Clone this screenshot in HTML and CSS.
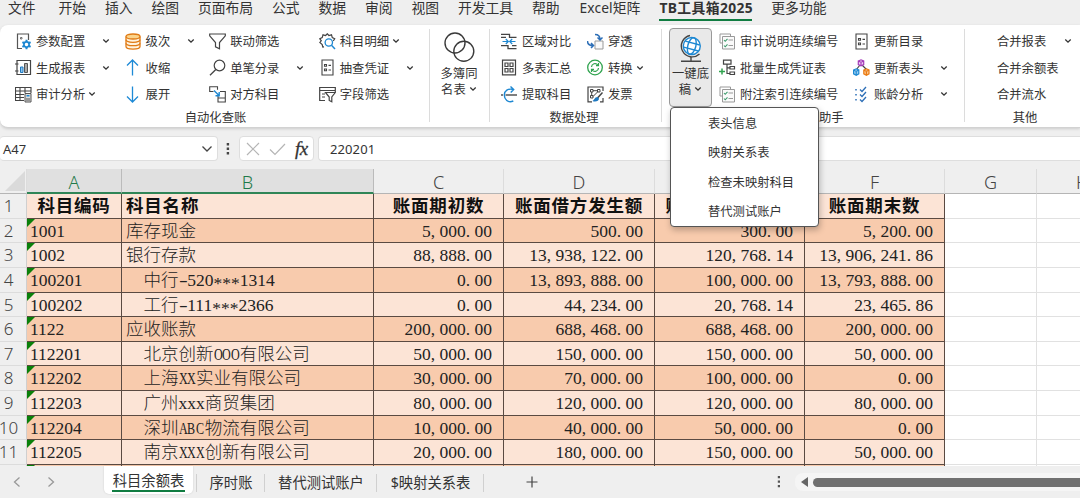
FILE: index.html
```html
<!DOCTYPE html>
<html lang="zh-CN">
<head>
    <meta charset="UTF-8">
    <meta name="viewport" content="width=device-width, initial-scale=1.0">
    <title>科目余额表</title>
    <link rel="stylesheet" href="styles.css">
</head>
<body>

<svg class="defs" width="0" height="0">
    <symbol id="chev" viewBox="0 0 8 6"><path d="M1.3 1.5 4 4.200 6.700 1.500" fill="none" stroke="#333" stroke-width="1.300"/></symbol>
    <symbol id="list" viewBox="0 0 17 17"><path d="M3 1h11v15H3zM5.5 5.500h2v1.800h-2zM5.500 10h2v1.800h-2zM9.500 6.400H12M9.500 11H12" fill="none" stroke="#444" stroke-width="1.100"/></symbol>
    <symbol id="checks" viewBox="0 0 17 17">
        <path d="M3 10H1V1h10.500v2.500" fill="none" stroke="#999"/>
        <path d="M3.500 3.500H15.500V16H3.500z" fill="#fafafa" stroke="#999"/>
        <path d="M9.500 7H14M9.500 12.500H14" stroke="#999"/>
        <path d="M5 7l1.200 1.300L8.500 5.800M5 12.500l1.200 1.300 2.300-2.500" fill="none" stroke="#3d9b6c" stroke-width="1.100"/>
    </symbol>
</svg>

<nav class="tabs">
    <span class="file">文件</span>
    <span>开始</span>
    <span>插入</span>
    <span>绘图</span>
    <span>页面布局</span>
    <span>公式</span>
    <span>数据</span>
    <span>审阅</span>
    <span>视图</span>
    <span>开发工具</span>
    <span>帮助</span>
    <span class="excel">Excel矩阵</span>
    <span class="active">TB工具箱2025</span>
    <span>更多功能</span>
</nav>

<div class="ribbon">
    <section class="group audit">
        <div class="cols">
            <div class="col w95">
                <div class="cmd">
                    <svg class="icon" viewBox="0 0 17 17"><path d="M7 15.500H2.500V1H13.500v6" fill="none" stroke="#555" stroke-width="1.200"/><path d="M5.500 4.500h1.500v1.500H5.500z" fill="none" stroke="#555" stroke-width=".8"/><path d="M11.500 6.800v9.400M7.400 9.100l8.200 4.800M7.400 13.900l8.200-4.800" stroke="#1e88d2" stroke-width="2"/><circle cx="11.500" cy="11.500" r="2.600" fill="#fff" stroke="#1e88d2" stroke-width="1.700"/></svg>
                    <span>参数配置</span><svg class="chev end"><use href="#chev"/></svg>
                </div>
                <div class="cmd">
                    <svg class="icon" viewBox="0 0 17 17"><path d="M2 1.500h13.500v14H2zM0 5h3.500M0 12h3.500" fill="none" stroke="#444" stroke-width="1.200"/><path d="M5.500 8H8v5.500H5.500z" fill="#8ac4ee" stroke="#1e78c0"/><path d="M9.500 4.500h3v9h-3z" fill="#aaa" stroke="#555"/></svg>
                    <span>生成报表</span><svg class="chev end"><use href="#chev"/></svg>
                </div>
                <div class="cmd">
                    <svg class="icon" viewBox="0 0 17 17"><path d="M9 14.500H.5v-13h15.500V7M.5 5H16M.5 8.500H9M.5 11.500H9M5 1.500v13M10 1.500V7" fill="none" stroke="#444" stroke-width="1.100"/><path d="M10 7.500h6v8.500h-6z" fill="#ddd" stroke="#555"/><path d="M11.500 9h3v1.500h-3z" fill="#1e88d2"/><path d="M12 12v3M14 12v3" stroke="#555"/></svg>
                    <span>审计分析</span><svg class="chev"><use href="#chev"/></svg>
                </div>
            </div>
            <div class="col w70">
                <div class="cmd">
                    <svg class="icon" viewBox="0 0 17 17"><path d="M1 3.500v10C1 17 15 17 15 13.500v-10" fill="#fff3df" stroke="#e07b16" stroke-width="1.300"/><ellipse cx="8" cy="3.500" rx="7" ry="2.500" fill="#fbd48b" stroke="#e07b16" stroke-width="1.300"/><path d="M1 6.800c0 3.300 14 3.300 14 0M1 10.200c0 3.300 14 3.300 14 0" fill="none" stroke="#e07b16" stroke-width="1.300"/></svg>
                    <span>级次</span><svg class="chev end"><use href="#chev"/></svg>
                </div>
                <div class="cmd">
                    <svg class="icon" viewBox="0 0 17 17"><path d="M7.500 16.500V1.500M2 6.500l5.500-5.500L13 6.500" fill="none" stroke="#1e8ad6" stroke-width="1.300"/></svg>
                    <span>收缩</span>
                </div>
                <div class="cmd">
                    <svg class="icon" viewBox="0 0 17 17"><path d="M7.500 .5v15M2 10.500l5.500 5.500L13 10.500" fill="none" stroke="#1e8ad6" stroke-width="1.300"/></svg>
                    <span>展开</span>
                </div>
            </div>
            <div class="col w95">
                <div class="cmd">
                    <svg class="icon" viewBox="0 0 17 17"><path d="M.7 1h15.600v1.800L10.500 9.500V15.800L6.500 13.800V9.500L.7 2.800z" fill="none" stroke="#444" stroke-width="1.200"/></svg>
                    <span>联动筛选</span>
                </div>
                <div class="cmd">
                    <svg class="icon" viewBox="0 0 17 17"><circle cx="10.500" cy="6.500" r="5.300" fill="none" stroke="#444" stroke-width="1.200"/><path d="M6.800 10.500 1 16.300" stroke="#444" stroke-width="1.300"/></svg>
                    <span>单笔分录</span><svg class="chev end"><use href="#chev"/></svg>
                </div>
                <div class="cmd">
                    <svg class="icon" viewBox="0 0 17 17"><path d="M4.500 5.500H.7V.8H8.500v3M11 5.500h5.300V9M9 9.500v6.500h7.300v-7M9 12H16.300" fill="none" stroke="#444" stroke-width="1.100"/><path d="M5 4.500l5 5M10.200 6v3.700H6.500" fill="none" stroke="#1e88d2" stroke-width="1.400"/></svg>
                    <span>对方科目</span>
                </div>
            </div>
            <div class="col w95">
                <div class="cmd">
                    <svg class="icon" viewBox="0 0 17 17"><path d="M5 13.800 3.800 14l-.6-2.400L.8 9.400 2.300 7.800.8 5.800l2.400-1.200L4 1.800l2.600.7L8.300 .8l1.600 1.700 2.600-.7.8 2.800 2.400 1.200L14.300 8" fill="none" stroke="#444" stroke-width="1.200"/><circle cx="9.800" cy="9.500" r="3.700" fill="#fff" stroke="#1e88d2" stroke-width="1.300"/><path d="M12.500 12.300 16 16" stroke="#1e88d2" stroke-width="1.500"/></svg>
                    <span>科目明细</span><svg class="chev"><use href="#chev"/></svg>
                </div>
                <div class="cmd">
                    <svg class="icon"><use href="#list"/></svg>
                    <span>抽查凭证</span><svg class="chev end"><use href="#chev"/></svg>
                </div>
                <div class="cmd">
                    <svg class="icon" viewBox="0 0 17 17"><path d="M6 14.500H.7v-13h15.600V6M.7 4.500h15.600M3 8h3M3 11h3" fill="none" stroke="#444" stroke-width="1.200"/><path d="M6.500 6.500h9.800L12.800 11v4.800l-2.600-1.300V11z" fill="#fff" stroke="#444" stroke-width="1.200"/></svg>
                    <span>字段筛选</span>
                </div>
            </div>
        </div>
        <p class="label">自动化查账</p>
    </section>

    <section class="group books">
        <div class="big">
            <svg width="31" height="31" viewBox="0 0 31 31"><g fill="none" stroke="#3a3a3a" stroke-width="1.400"><circle cx="11" cy="11" r="10"/><circle cx="19.800" cy="19.300" r="10"/></g></svg>
            <span>多簿同</span>
            <span>名表 <svg class="chev"><use href="#chev"/></svg></span>
        </div>
    </section>

    <section class="group data">
        <div class="cols">
            <div class="col w72">
                <div class="cmd">
                    <svg class="icon" viewBox="0 0 17 17"><path d="M0 1.300h8.500v3H15.500M0 4.300h5M0 12.700h7v3h8.500M11 12.700h4.500" fill="none" stroke="#444" stroke-width="1.300"/><path d="M1.500 8.500H7M4.800 6 7.300 8.500 4.800 11M14.500 8.500H9M11.200 6 8.700 8.500 11.200 11" fill="none" stroke="#1e88d2" stroke-width="1.200"/></svg>
                    <span>区域对比</span>
                </div>
                <div class="cmd">
                    <svg class="icon" viewBox="0 0 17 17"><path d="M1.500 1.200h13v14.600h-13zM4 4h3v3.500H4zM9 4h3v3.500H9zM4 9.500h3V13H4zM9 9.500h3V13H9z" fill="none" stroke="#444" stroke-width="1.200"/></svg>
                    <span>多表汇总</span>
                </div>
                <div class="cmd">
                    <svg class="icon" viewBox="0 0 17 17"><path d="M0 9h2M4.500 9H16" stroke="#555" stroke-width="1.300"/><path d="M12.500 3.500C7 2 3.300 5 3.300 9s3.500 8.500 9 6M9.500 .5 12.700 3.500 9.700 6.500" fill="none" stroke="#1e88d2" stroke-width="1.400"/></svg>
                    <span>提取科目</span>
                </div>
            </div>
            <div class="col w56">
                <div class="cmd">
                    <svg class="icon" viewBox="0 0 17 17"><path d="M8 8h8v8H8z" fill="#fafafa" stroke="#999"/><path d="M8 1.500c3 0 5 1.500 5 5M10.500 4.500 13 7l2.500-2.500M.5 8c0 3 2 4.500 5.500 4.500M4 10l2.500 2.500L4 15" fill="none" stroke="#2d6fb7" stroke-width="1.500"/></svg>
                    <span>穿透</span>
                </div>
                <div class="cmd">
                    <svg class="icon" viewBox="0 0 17 17"><circle cx="8" cy="8.500" r="7.300" fill="none" stroke="#2fa34e" stroke-width="1.300"/><path d="M4.500 8a3.500 3.500 0 0 1 6.300-2M11.500 4v2.700H9M11.500 9a3.500 3.500 0 0 1-6.300 2M4.500 13v-2.700H7" fill="none" stroke="#2fa34e" stroke-width="1.200"/></svg>
                    <span>转换</span><svg class="chev"><use href="#chev"/></svg>
                </div>
                <div class="cmd">
                    <svg class="icon" viewBox="0 0 17 17"><path d="M5 15.800H1V1h15v4M16 12v3.800h-3" fill="none" stroke="#444" stroke-width="1.200"/><path d="M3.500 3.500H6V6H3.500zM10.500 3.500H13V6h-2.500zM3.500 9.500H6V12H3.500zM6 4.700h4.500M4.700 6v3.500M6 10.500l5-5" fill="none" stroke="#444"/><path d="M15.500 6.500 10.500 12" stroke="#444" stroke-width="1.500"/><path d="M10.500 11c-3 0-3 3-5 4 3 1.500 6.500 0 6.500-2.500z" fill="#1e78c0"/></svg>
                    <span>发票</span>
                </div>
            </div>
        </div>
        <p class="label">数据处理</p>
    </section>

    <section class="group draft">
        <div class="cols">
            <div class="big pressed">
                <svg width="24" height="29" viewBox="0 0 24 29"><path d="M11 1.500A10.800 10.800 0 1 0 20.500 20M12 23v4M2 27.300h20" fill="none" stroke="#444" stroke-width="1.400"/><g fill="#fff" stroke="#1e88d2" stroke-width="1.400"><circle cx="12.800" cy="12" r="8.500"/><g fill="none" transform="rotate(15 12.800 12)"><ellipse cx="12.800" cy="12" rx="4" ry="8.500"/><path d="M5.300 9h15M5.300 15.200h15"/></g></g></svg>
                <span>一键底</span>
                <span>稿 <svg class="chev"><use href="#chev"/></svg></span>
                <ul class="menu">
                    <li>表头信息</li>
                    <li>映射关系表</li>
                    <li>检查未映射科目</li>
                    <li>替代测试账户</li>
                </ul>
            </div>
            <div class="col w120">
                <div class="cmd">
                    <svg class="icon"><use href="#checks"/></svg>
                    <span>审计说明连续编号</span>
                </div>
                <div class="cmd">
                    <svg class="icon" viewBox="0 0 17 17"><path d="M4.500 1.200h7.500v4H4.500zM8 5v9.500h2.500M8 8.800h3M11 7.500h4.500v2.500H11zM11 13h4.500v2.500H11z" fill="none" stroke="#444" stroke-width="1.200"/><path d="M0 12.500h6M3 9.500v6" stroke="#2fa34e" stroke-width="1.500"/></svg>
                    <span>批量生成凭证表</span>
                </div>
                <div class="cmd">
                    <svg class="icon"><use href="#checks"/></svg>
                    <span>附注索引连续编号</span>
                </div>
            </div>
            <div class="col w95">
                <div class="cmd">
                    <svg class="icon"><use href="#list"/></svg>
                    <span>更新目录</span>
                </div>
                <div class="cmd">
                    <svg class="icon" viewBox="0 0 17 17"><path d="M7 6 3 11M9 6l5 5" stroke="#444" stroke-width="1.200"/><g stroke-width="1.200"><path d="M5.300 2 8 .8 10.700 2v3.500L8 6.800 5.300 5.500zM5.300 2 8 3.300 10.700 2M8 3.300v3.500" fill="#f0d5f5" stroke="#a43bb8"/><path d="M.6 11l2.600-1.200L5.800 11v3.800l-2.600 1.400L.6 14.800zM.6 11l2.600 1.300L5.800 11M3.200 12.300v4" fill="#9fd3f5" stroke="#1e88d2"/><path d="M10.800 11l2.600-1.200L16 11v3.800l-2.600 1.400-2.600-1.400zM10.800 11l2.600 1.300L16 11M13.400 12.300v4" fill="#fbc58b" stroke="#ea7a12"/></g></svg>
                    <span>更新表头</span><svg class="chev end"><use href="#chev"/></svg>
                </div>
                <div class="cmd">
                    <svg class="icon" viewBox="0 0 17 17"><g fill="none" stroke="#2d6fb7" stroke-width="1.300"><path d="M7 3.500l2 2L13 1M7 8.500l2 2L13 6M7 13.500l2 2L13 11"/><path d="M3 3v1.500M3 8v1.500M3 13v1.500" stroke-width="1.500"/></g></svg>
                    <span>账龄分析</span><svg class="chev end"><use href="#chev"/></svg>
                </div>
            </div>
        </div>
        <p class="label">底稿助手</p>
    </section>

    <section class="group other">
        <div class="cols">
            <div class="col w75">
                <div class="cmd"><span>合并报表</span><svg class="chev end"><use href="#chev"/></svg></div>
                <div class="cmd"><span>合并余额表</span></div>
                <div class="cmd"><span>合并流水</span></div>
            </div>
        </div>
        <p class="label">其他</p>
    </section>
</div>

<div class="formula-bar">
    <div class="name-box">A47
        <svg width="12" height="8" viewBox="0 0 12 8"><path d="M1.500 1.500 6 6l4.500-4.500" fill="none" stroke="#444" stroke-width="1.300"/></svg>
    </div>
    <svg class="dots" width="4" height="14" viewBox="0 0 4 14"><path d="M.7 1h2.400v2.400H.7zM.7 5.500h2.400v2.400H.7zM.7 10h2.400v2.400H.7z" fill="#444"/></svg>
    <div class="fx-box">
        <svg width="14" height="14" viewBox="0 0 14 14"><path d="M1 1l12 12M13 1 1 13" stroke="#b5b5b5" stroke-width="1.200"/></svg>
        <svg width="17" height="14" viewBox="0 0 17 14"><path d="M1 7.500 6 12.500 16 2" fill="none" stroke="#b5b5b5" stroke-width="1.200"/></svg>
        <span>fx</span>
    </div>
    <div class="input">220201</div>
</div>

<div class="sheet" id="sheet">
    <div class="row heads">
        <span class="corner"></span>
        <span class="sel">A</span>
        <span class="sel">B</span>
        <span>C</span>
        <span>D</span>
        <span>E</span>
        <span>F</span>
        <span>G</span>
        <span>H</span>
    </div>
    <div class="row title">
        <span class="num">1</span>
        <span>科目编码</span>
        <span>科目名称</span>
        <span>账面期初数</span>
        <span>账面借方发生额</span>
        <span>账面贷方发生额</span>
        <span>账面期末数</span>
        <span class="blank"></span>
        <span class="blank"></span>
    </div>
</div>

<footer class="sheet-tabs">
    <svg class="prev" width="8" height="12" viewBox="0 0 8 12"><path d="M6.500 1.500 1.500 6l5 4.500" fill="none" stroke="#999" stroke-width="1.300"/></svg>
    <svg class="next" width="8" height="12" viewBox="0 0 8 12"><path d="M1.500 1.500 6.500 6l-5 4.500" fill="none" stroke="#999" stroke-width="1.300"/></svg>
    <div class="tab current"><span>科目余额表</span></div>
    <div class="tab t2">序时账</div>
    <div class="tab t3">替代测试账户</div>
    <div class="tab t4">$映射关系表</div>
    <svg class="plus" width="12" height="12" viewBox="0 0 12 12"><path d="M6 .5v11M.5 6h11" stroke="#444" stroke-width="1.200"/></svg>
    <svg class="dots" width="4" height="14" viewBox="0 0 4 14"><path d="M.8 1h2.200v2.200H.8zM.8 5.500h2.200v2.200H.8zM.8 10h2.200v2.200H.8z" fill="#555"/></svg>
    <div class="scroll">
        <svg width="7" height="10" viewBox="0 0 7 10"><path d="M7 0v10L0 5z" fill="#666"/></svg>
        <div class="thumb"></div>
    </div>
</footer>

<script src="script.js"></script>
</body>
</html>
```
FILE: styles.css
```css
* {
    margin: 0;
    padding: 0;
    box-sizing: border-box;
}

body {
    width: 1080px;
    height: 498px;
    overflow: hidden;
    background: #efefef;
    color: #333;
    font-family: "Noto Sans", "Noto Sans CJK SC", sans-serif;
    font-size: 12.3px;
    display: flex;
    flex-direction: column;
}

.defs {
    position: absolute;
}

/* ribbon tabs */
.tabs {
    display: flex;
    flex: none;
    height: 25px;
    padding-left: 8px;
    gap: 18.9px;
    font-size: 13.8px;
    line-height: 15px;
    white-space: nowrap;
}

.tabs .file {
    margin-right: 4px;
}

.tabs .excel {
    width: 61px;
    margin-left: 1px;
    letter-spacing: 0.1px;
}

.tabs .active {
    width: 93px;
    height: 21px;
    font-weight: bold;
    letter-spacing: 0.4px;
    border-bottom: 2px solid #107c41;
}

/* ribbon */
.ribbon {
    display: flex;
    flex: none;
    height: 103px;
    background: #fff;
    border-radius: 8px 0 0 8px;
    border-bottom: 1px solid #d2d2d2;
    box-shadow: 0 1px 3px rgba(0, 0, 0, 0.15);
}

.group {
    position: relative;
    display: flex;
    flex-direction: column;
    flex: none;
    padding-top: 3px;
}

.group + .group::before {
    content: "";
    position: absolute;
    left: 0;
    top: 4px;
    width: 1px;
    height: 93px;
    background: #dcdcdc;
}

.cols {
    display: flex;
}

.col {
    height: 80px;
    flex: none;
}

.cmd {
    display: flex;
    align-items: center;
    height: 26.5px;
    white-space: nowrap;
}

.icon {
    width: 17px;
    height: 17px;
    flex: none;
    margin-right: 4px;
}

.chev {
    width: 8px;
    height: 6px;
    flex: none;
    margin-left: 3px;
}

.chev.end {
    margin-left: auto;
}

.label {
    text-align: center;
    line-height: 19px;
}

.w56 { width: 56px; }
.w70 { width: 70px; }
.w72 { width: 72px; }
.w75 { width: 75px; }
.w95 { width: 95px; }
.w120 { width: 120px; }

.audit { width: 429px; padding-left: 15px; }
.audit .cols { gap: 14.6px; }
.audit .label { padding-right: 13px; }
.books { width: 60px; }
.data { width: 172px; padding-left: 12px; }
.data .cols { gap: 14px; }
.data .label { padding-right: 14px; }
.draft { width: 303px; padding-left: 8px; }
.draft .cols { gap: 7px; }
.draft .w120 { margin-right: 7px; }
.draft .label { padding-left: 5px; }
.other { width: 116px; padding-left: 33px; }
.other .label { padding-right: 27px; }

.big {
    display: flex;
    flex-direction: column;
    align-items: center;
    line-height: 16px;
    padding-top: 4px;
}

.big > svg {
    margin-bottom: 3px;
}

.pressed {
    position: relative;
    width: 43px;
    height: 79px;
    padding-top: 5px;
    background: #e9e9e9;
    border: 1px solid #999;
    border-radius: 4px;
    white-space: nowrap;
}

.big .chev {
    margin-left: 0;
    vertical-align: 2px;
}

.menu {
    position: absolute;
    z-index: 5;
    left: 0;
    top: 78px;
    width: 149px;
    height: 120px;
    padding: 1px 0 0 37px;
    list-style: none;
    line-height: 29.3px;
    background: #fff;
    border: 1px solid #555;
    border-radius: 4px;
    box-shadow: 1px 3px 6px rgba(0, 0, 0, 0.25);
}

/* formula bar */
.formula-bar {
    display: flex;
    flex: none;
    align-items: center;
    height: 41px;
    font-size: 13px;
}

.name-box, .fx-box, .input {
    display: flex;
    align-items: center;
    height: 25px;
    background: #fff;
    border: 1px solid #dedede;
    border-radius: 4px;
}

.name-box {
    width: 218px;
    padding: 0 3px;
    justify-content: space-between;
    border-left: 0;
}

.name-box svg {
    margin-right: 1px;
}

.formula-bar .dots {
    margin: 0 9px 0 8px;
}

.fx-box {
    width: 75px;
    padding-left: 6px;
    gap: 9px;
}

.fx-box span {
    font: italic 19px "Liberation Serif", serif;
    letter-spacing: -0.5px;
    -webkit-text-stroke: 0.3px #333;
}

.input {
    flex: 1;
    margin-left: 4px;
    padding-left: 11px;
    border-right: 0;
    border-radius: 4px 0 0 4px;
    letter-spacing: 0.1px;
}

/* sheet */
.sheet {
    height: 297px;
    overflow: hidden;
    flex: none;
}

.row {
    display: grid;
    grid-template-columns: 27px 95px 252px 130px 151px 150px 140px 92px 92px;
    height: 24.63px;
    font: 17.5px/25px "Liberation Serif", "Noto Sans CJK SC", serif;
    color: #222;
    font-weight: 300;
    white-space: pre;
}

.row > span {
    position: relative;
    overflow: hidden;
    background: #f8cbad;
    border-right: 1px solid #5a4a42;
    border-bottom: 1px solid #5a4a42;
    padding: 0 3px;
}

.row:nth-child(even) > span {
    background: #fce4d6;
}

.row .name {
    padding-left: 4px;
}

.row .money {
    text-align: right;
    padding-right: 11px;
}

.row .code::before {
    content: "";
    position: absolute;
    left: 0;
    top: 0;
    border-top: 8px solid #0a800a;
    border-right: 8px solid transparent;
}

/* every half-width character takes half an em */
.row b {
    display: inline-block;
    width: 0.5em;
    font-weight: normal;
    text-align: left;
    transform-origin: left center;
}

.row b.cap {
    transform: scaleX(0.69);
}

.row b.dash {
    transform: scaleX(1.5);
}

.row b.star {
    transform: translateY(3px);
}

.row > span.num,
.row:nth-child(even) > span.num {
    padding: 0 9px 0 0;
    background: #efefef;
    border-right: 1px solid #cfcfcf;
    border-bottom: 1px solid #dcdcdc;
    font: 300 17px/24px "Noto Sans", sans-serif;
    color: #444;
    display: flex;
    justify-content: center;
}

.row > span.blank,
.row:nth-child(even) > span.blank {
    background: #fff;
    border-color: #e1e1e1;
}

.heads {
    height: 25px;
}

.row.heads > span {
    background: #efefef;
    border-right: 1px solid #dcdcdc;
    border-bottom: 1px solid #b5b5b5;
    text-align: center;
    font: 300 18px/26px "Noto Sans", sans-serif;
    color: #444;
}

.row.heads > .sel {
    background: #e0e0e0;
    border-right-color: #bbb;
    border-bottom: 2px solid #2f8557;
    color: #1f7a4a;
}

.row.heads > .corner::after {
    content: "";
    position: absolute;
    right: 1px;
    bottom: 2px;
    border-left: 20px solid transparent;
    border-bottom: 20px solid #dadada;
}

.row.title > span:not(.num) {
    font-weight: bold;
    color: #111;
    text-align: center;
    letter-spacing: 0.8px;
}

.row.title > span:nth-child(3) {
    text-align: left;
    padding-left: 4px;
}

/* sheet tabs */
.sheet-tabs {
    display: flex;
    flex: 1;
    align-items: center;
    font-size: 14.3px;
    white-space: nowrap;
}

.sheet-tabs .prev { margin: 0 0 0 13px; }
.sheet-tabs .next { margin: 0 0 0 26px; }

.tab {
    position: relative;
    height: 28px;
    line-height: 29px;
    text-align: center;
}

.tab::after {
    content: "";
    position: absolute;
    right: 0;
    top: 6px;
    width: 1px;
    height: 18px;
    background: #d0d0d0;
}

.tab.current {
    width: 89px;
    margin: -4px 4px 0 49px;
    background: #fff;
    border-radius: 0 0 5px 5px;
    box-shadow: 0 0 2px rgba(0, 0, 0, 0.15);
}

.tab.current::after {
    right: -4px;
    top: 8px;
}

.tab.current span {
    display: block;
    width: 73px;
    height: 26px;
    margin: 0 auto;
    border-bottom: 2px solid #107c41;
}

.t2 { width: 68px; }
.t3 { width: 112px; }
.t4 { width: 107px; }

.plus {
    margin-left: 42px;
}

.sheet-tabs .dots {
    margin-left: 239px;
}

.scroll {
    display: flex;
    align-items: center;
    flex: 1;
    height: 18px;
    margin-left: 14px;
    padding-left: 6px;
    background: #f5f5f5;
    border-radius: 8px 0 0 8px;
}

.thumb {
    flex: 1;
    height: 9px;
    margin-left: 5px;
    background: #707070;
    border-radius: 5px 0 0 5px;
}
```
FILE: script.js
```js
const rows = [
    ['1001', '库存现金', '5,000.00', '500.00', '300.00', '5,200.00'],
    ['1002', '银行存款', '88,888.00', '13,938,122.00', '120,768.14', '13,906,241.86'],
    ['100201', '  中行-520***1314', '0.00', '13,893,888.00', '100,000.00', '13,793,888.00'],
    ['100202', '  工行-111***2366', '0.00', '44,234.00', '20,768.14', '23,465.86'],
    ['1122', '应收账款', '200,000.00', '688,468.00', '688,468.00', '200,000.00'],
    ['112201', '  北京创新OOO有限公司', '50,000.00', '150,000.00', '150,000.00', '50,000.00'],
    ['112202', '  上海XX实业有限公司', '30,000.00', '70,000.00', '100,000.00', '0.00'],
    ['112203', '  广州xxx商贸集团', '80,000.00', '120,000.00', '120,000.00', '80,000.00'],
    ['112204', '  深圳ABC物流有限公司', '10,000.00', '40,000.00', '50,000.00', '0.00'],
    ['112205', '  南京XXX创新有限公司', '20,000.00', '180,000.00', '150,000.00', '50,000.00'],
    ['', '', '', '', '', '']
];

// commas, dots and letters get a fixed half-width box, digits already have it
function halfWidth(text) {
    return text.replace(/[A-Za-z,.*\- ]/g, (ch) => {
        let cls = '';
        if (/[A-Z]/.test(ch)) cls = 'cap';
        if (ch === '-') cls = 'dash';
        if (ch === '*') cls = 'star';
        return `<b class="${cls}">${ch}</b>`;
    });
}

const sheet = document.getElementById('sheet');

rows.forEach((cells, i) => {
    const row = document.createElement('div');
    row.className = 'row';
    let html = `<span class="num">${i + 2 > 11 ? '' : i + 2}</span>`;
    cells.forEach((text, c) => {
        const cls = c === 0 ? 'code' : c > 1 ? 'money' : 'name';
        html += `<span class="${cls}">${halfWidth(text)}</span>`;
    });
    html += '<span class="blank"></span><span class="blank"></span>';
    row.innerHTML = html;
    sheet.appendChild(row);
});
```
